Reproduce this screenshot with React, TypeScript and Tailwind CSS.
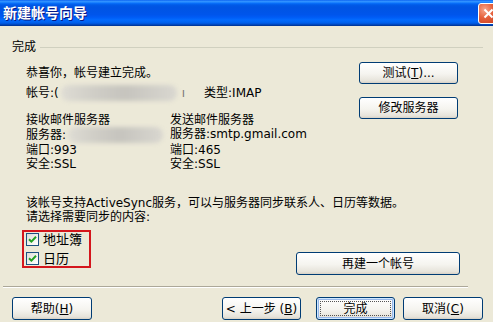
import React from 'react';

const font = "font-['DejaVu_Sans','Noto_Sans_CJK_SC',sans-serif]";

const XpButton = ({
  children,
  className = '',
  isDefault = false,
}: {
  children: React.ReactNode;
  className?: string;
  isDefault?: boolean;
}) => (
  <div
    className={`relative flex items-center justify-center rounded-[3px] border border-[#003c74] bg-[linear-gradient(180deg,#ffffff_0%,#f5f4ef_55%,#e6e3da_90%,#d6d0c5_100%)] text-[12px] leading-[14px] text-black ${
      isDefault ? 'shadow-[inset_0_0_0_1px_#cee7ff,inset_0_0_0_2px_#98b8ea]' : ''
    } ${className}`}
  >
    {isDefault && (
      <span className="absolute inset-[3px] border border-dotted border-[#555]" />
    )}
    {children}
  </div>
);

const Check = () => (
  <span className="flex h-[13px] w-[13px] items-center justify-center border border-[#1c5180] bg-[linear-gradient(135deg,#dcdcd7_0%,#f4f4f0_60%,#ffffff_100%)]">
    <svg width="9" height="9" viewBox="0 0 9 9">
      <path d="M1 4.2 L3.4 6.6 L8 1.8" stroke="#21a121" strokeWidth="2" fill="none" />
    </svg>
  </span>
);

const Blob = ({ className }: { className: string }) => (
  <span
    className={`inline-block rounded-full bg-[linear-gradient(90deg,#dedcd4_0%,#cfcdc6_30%,#c6c4be_55%,#d9d7d0_100%)] blur-[2px] ${className}`}
  />
);

export default function App() {
  return (
    <div className={`h-[322px] w-[493px] overflow-hidden bg-[#ece9d8] text-[12px] text-black ${font}`}>
      {/* Title bar */}
      <div className="flex h-[26px] items-center bg-[linear-gradient(180deg,#0058ee_0%,#3593ff_4%,#288eff_8%,#0a72fc_12%,#0262ee_16%,#0057e5_22%,#0054e3_30%,#0055eb_56%,#005bf5_66%,#026afe_76%,#0062ef_86%,#0052d6_92%,#0040ab_96%,#003092_100%)] pl-[3px]">
        <span className="text-[14px] font-bold leading-[14px] text-white [text-shadow:1px_1px_0_#0a1883]">
          新建帐号向导
        </span>
        <div className="ml-auto -mr-[6px] flex h-[21px] w-[21px] items-center justify-center rounded-[3px] border border-white bg-[radial-gradient(circle_at_30%_30%,#f7a58a_0%,#e5603b_45%,#c4391a_100%)]">
          <svg width="11" height="11" viewBox="0 0 11 11">
            <path d="M1.5 1.5 L9.5 9.5 M9.5 1.5 L1.5 9.5" stroke="white" strokeWidth="2" />
          </svg>
        </div>
      </div>

      {/* Group header */}
      <div className="mt-[14px] flex items-center pl-[12px] pr-[10px]">
        <span className="leading-[14px]">完成</span>
        <span className="ml-[4px] h-px flex-1 bg-[#d0d0bf]" />
      </div>

      {/* Summary + action buttons */}
      <div className="mt-[8px] flex pl-[26px]">
        <div className="flex w-[333px] flex-col leading-[14px]">
          <div className="mt-[4px]">恭喜你，帐号建立完成。</div>
          <div className="mt-[5px] flex items-center">
            <span>帐号:(</span>
            <Blob className="ml-[2px] h-[16px] w-[116px]" />
            <span className="ml-[5px] text-[#777]">ı</span>
            <span className="ml-[19px]">类型:IMAP</span>
          </div>
          <div className="mt-[12px] grid grid-cols-[144px_1fr]">
            <div>接收邮件服务器</div>
            <div>发送邮件服务器</div>
            <div className="flex items-center">
              <span>服务器:</span>
              <Blob className="ml-[2px] h-[16px] w-[95px]" />
            </div>
            <div>服务器:smtp.gmail.com</div>
            <div>端口:993</div>
            <div>端口:465</div>
            <div>安全:SSL</div>
            <div>安全:SSL</div>
          </div>
        </div>
        <div className="flex flex-col">
          <XpButton className="h-[22px] w-[99px]">
            测试(<span className="underline">T</span>)...
          </XpButton>
          <XpButton className="mt-[13px] h-[22px] w-[99px]">修改服务器</XpButton>
        </div>
      </div>

      {/* ActiveSync */}
      <div className="mt-[25px] pl-[26px] leading-[14px]">
        <div>该帐号支持ActiveSync服务，可以与服务器同步联系人、日历等数据。</div>
        <div>请选择需要同步的内容:</div>
      </div>

      <div className="mt-[6px] flex items-start pl-[22px]">
        <div className="flex w-[69px] flex-col gap-[6px] border-2 border-[#d4161c] pb-[1px] pl-[2px] pt-[1px]">
          <label className="flex items-center gap-[4px] leading-[13px]">
            <Check />
            <span className="text-[13px]">地址簿</span>
          </label>
          <label className="flex items-center gap-[4px] leading-[13px]">
            <Check />
            <span className="text-[13px]">日历</span>
          </label>
        </div>
        <XpButton className="ml-[205px] mt-[22px] h-[23px] w-[164px]">再建一个帐号</XpButton>
      </div>

      {/* Separator */}
      <div className="ml-[3px] mt-[11px] w-[465px] border-b border-t border-b-white border-t-[#aca899]" />

      {/* Bottom buttons */}
      <div className="mt-[9px] flex pl-[12px]">
        <XpButton className="h-[23px] w-[80px]">
          帮助(<span className="underline">H</span>)
        </XpButton>
        <XpButton className="ml-[130px] h-[23px] w-[79px]">
          &lt; 上一步 (<span className="underline">B</span>)
        </XpButton>
        <XpButton isDefault className="ml-[15px] h-[23px] w-[79px]">
          完成
        </XpButton>
        <XpButton className="ml-[8px] h-[23px] w-[80px]">
          取消(<span className="underline">C</span>)
        </XpButton>
      </div>
    </div>
  );
}
